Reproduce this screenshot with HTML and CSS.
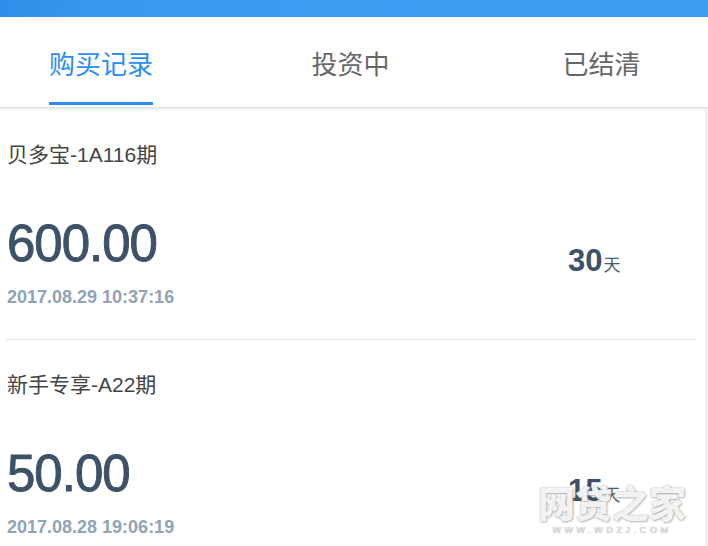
FILE: index.html
```html
<!DOCTYPE html>
<html lang="zh-CN">
<head>
<meta charset="utf-8">
<title>购买记录</title>
<link rel="stylesheet" href="styles.css">
</head>
<body>
<div class="page">
  <div class="topbar"></div>
  <nav class="tabs">
    <div class="tab active"><span class="tab-label">购买记录</span></div>
    <div class="tab"><span class="tab-label">投资中</span></div>
    <div class="tab"><span class="tab-label">已结清</span></div>
  </nav>
  <div class="band"></div>
  <main class="content">
    <section class="list">
      <article class="record">
        <div class="title">贝多宝-1A116期</div>
        <div class="row">
          <div class="left">
            <div class="amount">600.00</div>
            <div class="date">2017.08.29 10:37:16</div>
          </div>
          <div class="days"><span class="num">30</span><span class="unit">天</span></div>
        </div>
      </article>
      <article class="record">
        <div class="title">新手专享-A22期</div>
        <div class="row">
          <div class="left">
            <div class="amount">50.00</div>
            <div class="date">2017.08.28 19:06:19</div>
          </div>
          <div class="days"><span class="num">15</span><span class="unit">天</span></div>
        </div>
      </article>
    </section>
    <aside class="gutter"></aside>
  </main>
  <div class="watermark">
    <div class="wm-big">网贷之家</div>
    <div class="wm-small">WWW.WDZJ.COM</div>
  </div>
</div>
</body>
</html>
```

FILE: styles.css
```css
html, body {
  margin: 0;
  padding: 0;
  background: #ffffff;
}
body {
  font-family: "Liberation Sans", "Noto Sans CJK SC", sans-serif;
  width: 708px;
  height: 546px;
  overflow: hidden;
}
.page {
  position: relative;
  width: 708px;
  height: 546px;
  overflow: hidden;
}
.topbar {
  height: 17px;
  background: linear-gradient(100deg, #2e8de8 0%, #3597ee 12%, #3a9cf0 30%, #3c9df1 100%);
}
.tabs {
  display: grid;
  grid-template-columns: 202px 297px 205px 4px;
  background: #ffffff;
  border-bottom: 1px solid #dcdfe3;
  box-sizing: border-box;
  height: 91px;
}
.tab {
  display: flex;
  justify-content: center;
  align-items: flex-start;
  padding-top: 33px;
}
.tab-label {
  display: block;
  font-family: "Noto Sans CJK SC", sans-serif;
  font-size: 26px;
  line-height: 26px;
  color: #666666;
  padding-bottom: 26px;
  border-bottom: 3px solid transparent;
}
.tab.active .tab-label {
  color: #2a8ef0;
  border-bottom-color: #2a8ef0;
}
.band {
  height: 2px;
  background: #eef2f6;
}
.content {
  display: flex;
  height: 436px;
}
.list {
  width: 705px;
  background: #ffffff;
}
.gutter {
  flex: 1;
  background: #f0f0f0;
}
.record {
  margin: 0 9px 0 6px;
  height: 230px;
  box-sizing: border-box;
  border-bottom: 1px solid #e2e2e2;
  padding: 34px 0 0 1px;
}
.title {
  font-size: 21px;
  line-height: 22px;
  color: #444444;
}
.row {
  display: flex;
  align-items: center;
  margin-top: 53px;
}
.left {
  width: 561px;
}
.amount {
  font-size: 51px;
  line-height: 50px;
  letter-spacing: -1px;
  color: #3d5168;
  -webkit-text-stroke: 0.9px #3d5168;
}
.date {
  margin-top: 19px;
  font-size: 18px;
  line-height: 18px;
  font-weight: bold;
  color: #90a3b7;
}
.days {
  margin-bottom: 4px;
  color: #3d5168;
}
.days .num {
  font-size: 31px;
  font-weight: bold;
}
.days .unit {
  font-family: "Noto Sans CJK SC", sans-serif;
  font-size: 17px;
  color: #4a5b70;
  margin-left: 1px;
}
.watermark {
  position: absolute;
  left: 536px;
  top: 482px;
  width: 152px;
  text-align: center;
}
.wm-big {
  font-family: "Noto Sans CJK SC", sans-serif;
  font-weight: 900;
  font-size: 37px;
  line-height: 40px;
  color: rgba(255, 255, 255, 0.9);
  text-shadow: 0 0 2px rgba(130, 130, 130, 0.7), 1px 1px 2px rgba(160, 160, 160, 0.6);
}
.wm-small {
  font-size: 9px;
  line-height: 10px;
  letter-spacing: 3.6px;
  color: rgba(235, 235, 235, 0.95);
  text-shadow: 0 0 1px rgba(120, 120, 120, 0.9);
  margin-top: 3px;
}
```
